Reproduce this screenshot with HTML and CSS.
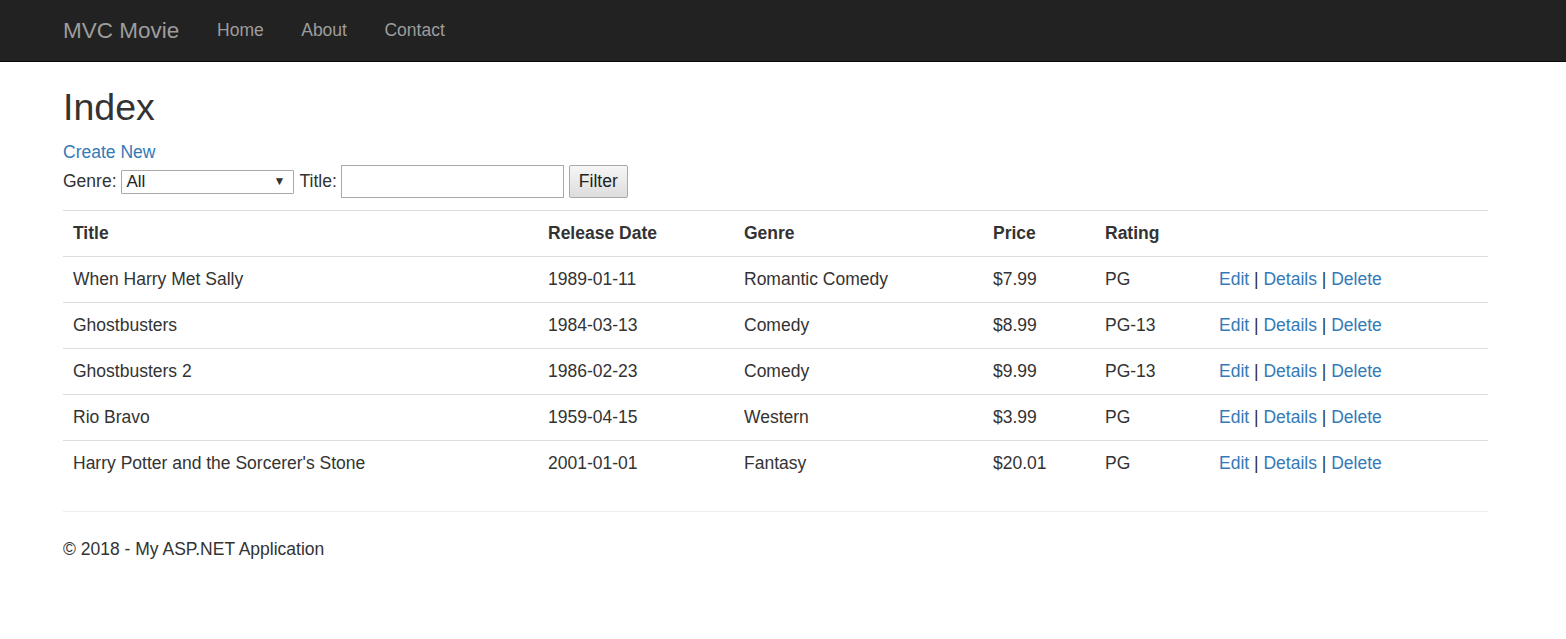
FILE: index.html
```
<!DOCTYPE html>
<html>
<head>
<meta charset="utf-8">
<title>Index - MVC Movie</title>
<link rel="stylesheet" href="styles.css">
</head>
<body>
<nav class="navbar">
  <div class="container nav-inner">
    <a class="brand" href="#">MVC Movie</a>
    <ul class="nav-links">
      <li><a href="#">Home</a></li>
      <li><a href="#">About</a></li>
      <li><a href="#">Contact</a></li>
    </ul>
  </div>
</nav>
<main class="container body-content">
  <h2 class="page-title">Index</h2>
  <p class="create"><a href="#">Create New</a></p>
  <form class="filter">
    <label class="lbl">Genre:</label>
    <div class="select"><span>All</span><span class="caret">&#9660;</span></div>
    <label class="lbl lbl-title">Title:</label>
    <input class="text-input" type="text">
    <button class="btn" type="button">Filter</button>
  </form>
  <table class="table">
    <colgroup>
      <col class="c1"><col class="c2"><col class="c3"><col class="c4"><col class="c5"><col class="c6">
    </colgroup>
    <tr><th>Title</th><th>Release Date</th><th>Genre</th><th>Price</th><th>Rating</th><th></th></tr>
    <tr><td>When Harry Met Sally</td><td>1989-01-11</td><td>Romantic Comedy</td><td>$7.99</td><td>PG</td><td><a href="#">Edit</a> | <a href="#">Details</a> | <a href="#">Delete</a></td></tr>
    <tr><td>Ghostbusters</td><td>1984-03-13</td><td>Comedy</td><td>$8.99</td><td>PG-13</td><td><a href="#">Edit</a> | <a href="#">Details</a> | <a href="#">Delete</a></td></tr>
    <tr><td>Ghostbusters 2</td><td>1986-02-23</td><td>Comedy</td><td>$9.99</td><td>PG-13</td><td><a href="#">Edit</a> | <a href="#">Details</a> | <a href="#">Delete</a></td></tr>
    <tr><td>Rio Bravo</td><td>1959-04-15</td><td>Western</td><td>$3.99</td><td>PG</td><td><a href="#">Edit</a> | <a href="#">Details</a> | <a href="#">Delete</a></td></tr>
    <tr><td>Harry Potter and the Sorcerer's Stone</td><td>2001-01-01</td><td>Fantasy</td><td>$20.01</td><td>PG</td><td><a href="#">Edit</a> | <a href="#">Details</a> | <a href="#">Delete</a></td></tr>
  </table>
  <hr class="rule">
  <footer class="footer">
    <p>&copy; 2018 - My ASP.NET Application</p>
  </footer>
</main>
</body>
</html>
```
FILE: styles.css
```
* { box-sizing: border-box; }
html, body { margin: 0; padding: 0; }
body {
  font-family: "Liberation Sans", Arial, Helvetica, sans-serif;
  font-size: 17.5px;
  line-height: 25px;
  color: #333;
  background: #fff;
}
a { color: #337ab7; text-decoration: none; }
.container {
  width: 1488px;
  padding-left: 63px;
}
.navbar {
  height: 62px;
  background: #222;
  border-bottom: 1px solid #080808;
}
.nav-inner {
  display: flex;
  align-items: center;
  height: 61px;
}
.brand {
  color: #9d9d9d;
  font-size: 22.5px;
  line-height: 25px;
  padding-right: 19px;
}
.nav-links {
  list-style: none;
  margin: 0;
  padding: 0;
  display: flex;
}
.nav-links a {
  display: block;
  color: #9d9d9d;
  padding: 0 18.75px;
  line-height: 25px;
}
.page-title {
  font-size: 37.5px;
  font-weight: 500;
  line-height: 41px;
  margin: 25px 0 12px;
}
.create { margin: 0; }
.filter {
  display: flex;
  align-items: center;
  gap: 5px;
  height: 33px;
  margin: 0 0 12px;
}
.lbl { line-height: 25px; }
.lbl-title { margin-left: 1px; }
.select {
  width: 173px;
  height: 24px;
  border: 1px solid #a9a9a9;
  border-radius: 1px;
  display: flex;
  align-items: center;
  justify-content: space-between;
  padding: 0 7px 0 5px;
  font-size: 17px;
  color: #222;
  margin-left: -1px;
}
.caret { font-size: 12px; color: #333; }
.text-input {
  width: 223px;
  height: 33px;
  border: 1px solid #a9a9a9;
  padding: 2px 3px;
  font-family: inherit;
  font-size: 17px;
  margin-left: -1px;
}
.btn {
  width: 59px;
  height: 33px;
  border: 1px solid #a9a9a9;
  border-radius: 2px;
  background: linear-gradient(#f6f6f6, #dddddd);
  font-family: inherit;
  font-size: 17.5px;
  color: #222;
  padding: 0;
}
.table {
  width: 1425px;
  border-collapse: collapse;
  margin-bottom: 25px;
  table-layout: fixed;
}
.c1 { width: 475px; }
.c2 { width: 196px; }
.c3 { width: 249px; }
.c4 { width: 112px; }
.c5 { width: 114px; }
.c6 { width: 279px; }
.table th, .table td {
  text-align: left;
  padding: 10px;
  line-height: 25px;
  border-top: 1px solid #ddd;
  vertical-align: top;
}
.table th { font-weight: bold; }
.rule {
  margin: 0 0 25px;
  border: 0;
  border-top: 1px solid #eee;
  width: 1425px;
}
.footer p { margin: 0 0 12px; }
```
